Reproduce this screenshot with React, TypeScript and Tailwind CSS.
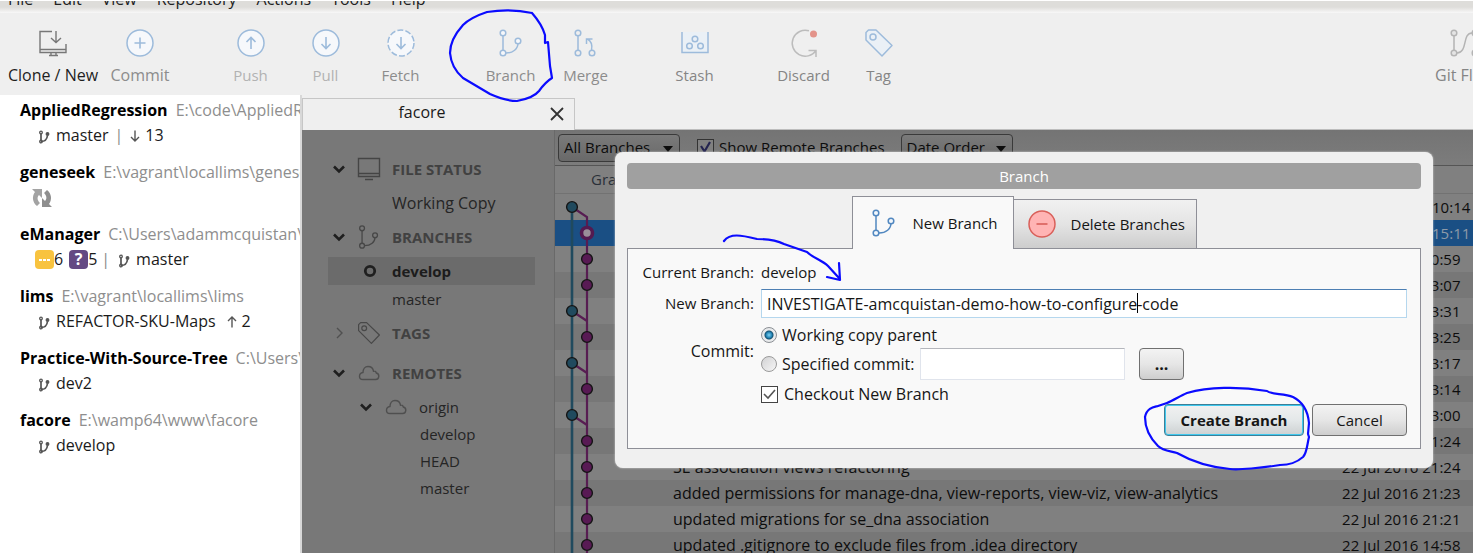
import type { ReactNode } from "react";

const blue = "#9dbbdb";

function Svg({ children, w = 30, h = 30, className = "" }: { children: ReactNode; w?: number; h?: number; className?: string }) {
  return (
    <svg width={w} height={h} viewBox={`0 0 ${w} ${h}`} fill="none" className={`shrink-0 ${className}`} aria-hidden="true">
      {children}
    </svg>
  );
}

function BranchGlyph({ color, fill = "none", size = 30 }: { color: string; fill?: string; size?: number }) {
  return (
    <svg width={size} height={size} viewBox="0 0 30 30" fill="none" className="shrink-0" aria-hidden="true">
      <g stroke={color} strokeWidth="1.5">
        <path d="M7 8v14M10 25c7 0 12-4 12-10" />
        <circle cx="7" cy="5" r="2.8" fill={fill} />
        <circle cx="7" cy="25" r="2.8" fill={fill} />
        <circle cx="22" cy="13" r="2.8" fill={fill} />
      </g>
    </svg>
  );
}

function SmallBranch() {
  return (
    <Svg w={12} h={14} className="mt-0.5">
      <g stroke="#555" strokeWidth="1.3">
        <path d="M3 3.500v8M3 11.500c4 0 6-2 6.500-6" strokeWidth="1.700" />
        <circle cx="3" cy="2.500" r="1.300" />
        <circle cx="3" cy="11.500" r="1.300" />
        <circle cx="9.500" cy="4" r="1.300" fill="#555" />
      </g>
    </Svg>
  );
}

function SmallArrow({ up = false }: { up?: boolean }) {
  return (
    <Svg w={12} h={14}>
      <path d={up ? "M6 12.500V2M2 6l4-4 4 4" : "M6 1.500V12M2 8l4 4 4-4"} stroke="#555" strokeWidth="1.400" />
    </Svg>
  );
}

function Chevron({ open = true }: { open?: boolean }) {
  return (
    <Svg w={14} h={14}>
      {open ? (
        <path d="M2 4.500l5 5 5-5" stroke="#1f1f1f" strokeWidth="2.600" />
      ) : (
        <path d="M5 2l5 5-5 5" stroke="#505050" strokeWidth="1.400" />
      )}
    </Svg>
  );
}

function Cloud() {
  return (
    <Svg w={22} h={16}>
      <path
        d="M5 14.500h12.500a3.300 3.300 0 0 0 .8-6.500C18 6.500 16.500 6 15.500 6.200 15 3 12.500 1.500 10 1.500 7 1.500 5 4 5 7.500 3 7.800 1.500 9.200 1.500 11.200c0 2 1.500 3.300 3.500 3.300z"
        stroke="#4f4f4f"
        strokeWidth="1.400"
      />
    </Svg>
  );
}

function TagGlyph({ color, fill = "none", size = 30 }: { color: string; fill?: string; size?: number }) {
  return (
    <svg width={size} height={size} viewBox="0 0 30 30" fill="none" aria-hidden="true" className="shrink-0">
      <path d="M2 4.500L4.500 2H12L28 17.500 18 28 2 12z" fill={fill} stroke={color} strokeWidth="1.500" strokeLinejoin="round" />
      <circle cx="9" cy="9" r="3" stroke={color} strokeWidth="1.500" />
    </svg>
  );
}

const icons: Record<string, ReactNode> = {
  clone: (
    <Svg>
      <path d="M14 3.500H2v21h26V16M2 21.500h26M11 27.500h9M13 25v2M18 25v2" stroke="#777" strokeWidth="1.400" />
      <path d="M18 3v11M13 10l5 4.500 5-4.500" stroke="#777" strokeWidth="1.400" />
    </Svg>
  ),
  commit: (
    <Svg>
      <circle cx="15" cy="15" r="13" fill="#f6f8fb" stroke={blue} strokeWidth="1.500" />
      <path d="M15 9.500v11M9.500 15h11" stroke={blue} strokeWidth="1.600" />
    </Svg>
  ),
  push: (
    <Svg>
      <circle cx="15" cy="15" r="13" fill="#f6f8fb" stroke={blue} strokeWidth="1.500" />
      <path d="M15 21V9.500M10.500 14L15 9.500l4.500 4.500" stroke={blue} strokeWidth="1.600" />
    </Svg>
  ),
  pull: (
    <Svg>
      <circle cx="15" cy="15" r="13" fill="#f6f8fb" stroke={blue} strokeWidth="1.500" />
      <path d="M15 9v11.500M10.500 16l4.500 4.500 4.500-4.500" stroke={blue} strokeWidth="1.600" />
    </Svg>
  ),
  fetch: (
    <Svg>
      <circle cx="15" cy="15" r="13" fill="#f6f8fb" stroke={blue} strokeWidth="1.500" strokeDasharray="6 2.170" />
      <path d="M15 9v11.500M10.500 16l4.500 4.500 4.500-4.500" stroke={blue} strokeWidth="1.600" />
    </Svg>
  ),
  branch: <BranchGlyph color={blue} fill="#f6f8fb" />,
  merge: (
    <Svg>
      <g stroke={blue} strokeWidth="1.500">
        <path d="M7 8v14M20.500 22c1-5-.5-9-4-11M15.500 16V11h6" />
        <circle cx="7" cy="5" r="2.800" />
        <circle cx="7" cy="25" r="2.800" />
        <circle cx="21" cy="25" r="2.800" />
      </g>
    </Svg>
  ),
  stash: (
    <Svg>
      <path d="M2 4v20.500h26V4" fill="#eaf0f6" stroke={blue} strokeWidth="1.500" />
      <g stroke={blue} strokeWidth="1.500">
        <circle cx="15" cy="11" r="2.800" />
        <circle cx="9.500" cy="18" r="2.800" />
        <circle cx="20.500" cy="18" r="2.800" />
      </g>
    </Svg>
  ),
  discard: (
    <Svg>
      <path d="M20 2.800A13 13 0 1 0 27 22.500M19.500 22.500h7.500v6.500" stroke="#bcbcbc" strokeWidth="1.500" />
      <circle cx="24.500" cy="6" r="3.500" fill="#e3938a" />
    </Svg>
  ),
  tag: <TagGlyph color={blue} fill="#eaf0f6" />,
  flow: (
    <Svg>
      <g stroke="#b4b4b4" strokeWidth="1.500" fill="#e4e4e4">
        <path d="M4 8v14M7 25C18 25 12 5 22 5M25 8v14" fill="none" />
        <circle cx="4" cy="5" r="2.800" />
        <circle cx="4" cy="25" r="2.800" />
        <circle cx="25" cy="5" r="2.800" />
        <circle cx="25" cy="25" r="2.800" />
      </g>
    </Svg>
  ),
};

const tools = [
  { id: "clone", label: "Clone / New", cls: "w-[106px] text-base text-[#1e1e1e]" },
  { id: "commit", label: "Commit", cls: "w-[68px] text-base text-[#8c8c8c]" },
  { id: "push", label: "Push", cls: "ml-[39px] w-[75px] text-[#b2b2b2]" },
  { id: "pull", label: "Pull", cls: "w-[75px] text-[#b2b2b2]" },
  { id: "fetch", label: "Fetch", cls: "w-[75px] text-[#8c8c8c]" },
  { id: "branch", label: "Branch", cls: "ml-[35px] w-[75px] text-[#8c8c8c]" },
  { id: "merge", label: "Merge", cls: "w-[75px] text-[#8c8c8c]" },
  { id: "stash", label: "Stash", cls: "ml-[34px] w-[75px] text-[#858585]" },
  { id: "discard", label: "Discard", cls: "ml-[34px] w-[75px] text-[#858585]" },
  { id: "tag", label: "Tag", cls: "w-[75px] text-[#858585]" },
  { id: "flow", label: "Git Flow", cls: "ml-auto -mr-[22px] w-[60px] text-base text-[#858585]" },
];

function Toolbar() {
  return (
    <div className="flex h-[82px] shrink-0 overflow-hidden bg-[#efefef]">
      {tools.map((t) => (
        <button key={t.id} type="button" className={`flex shrink-0 flex-col items-center pt-[15px] whitespace-nowrap ${t.cls}`}>
          {icons[t.id]}
          <span className="mt-[7px] leading-5">{t.label}</span>
        </button>
      ))}
    </div>
  );
}

const repos: { name: string; path: string; status: ReactNode }[] = [
  {
    name: "AppliedRegression",
    path: "E:\\code\\AppliedRegression",
    status: (
      <div className="flex items-center gap-1.5 pl-[18px]">
        <SmallBranch />
        <span>master</span>
        <span className="text-[#8a8a8a]">|</span>
        <SmallArrow />
        <span className="-ml-0.5">13</span>
      </div>
    ),
  },
  {
    name: "geneseek",
    path: "E:\\vagrant\\locallims\\geneseek",
    status: (
      <div className="pt-0.5 pl-[11px]">
        <Svg w={22} h={22}>
          <path d="M1 2h10v9L8 8c-2 2-2 5 1 8l-3 3C1 15 1 9 4 5z" fill="#a3a3a3" />
          <path d="M21 20H11v-9l3 3c2-2 2-5-1-8l3-3c5 4 5 10 2 14z" fill="#8f8f8f" />
        </Svg>
      </div>
    ),
  },
  {
    name: "eManager",
    path: "C:\\Users\\adammcquistan\\Documents",
    status: (
      <div className="flex items-center pl-[15px]">
        <span className="flex size-[19px] items-center justify-center rounded bg-[#f8c33f]">
          <Svg w={13} h={4}>
            <path d="M1 1h3v2H1zM5 1h3v2H5zM9 1h3v2H9z" fill="#fff" />
          </Svg>
        </span>
        <span>6</span>
        <span className="ml-1.5 flex size-[19px] items-center justify-center rounded bg-[#644983] font-bold text-white">?</span>
        <span>5</span>
        <span className="mx-1 text-[#8a8a8a]">|</span>
        <span className="ml-1 flex items-center gap-1.5">
          <SmallBranch />
          master
        </span>
      </div>
    ),
  },
  {
    name: "lims",
    path: "E:\\vagrant\\locallims\\lims",
    status: (
      <div className="flex items-center gap-1.5 pl-[18px]">
        <SmallBranch />
        <span className="mr-1">REFACTOR-SKU-Maps</span>
        <SmallArrow up />
        <span className="-ml-0.5">2</span>
      </div>
    ),
  },
  {
    name: "Practice-With-Source-Tree",
    path: "C:\\Users\\adammcquistan",
    status: (
      <div className="flex items-center gap-1.5 pl-[18px]">
        <SmallBranch />
        <span>dev2</span>
      </div>
    ),
  },
  {
    name: "facore",
    path: "E:\\wamp64\\www\\facore",
    status: (
      <div className="flex items-center gap-1.5 pl-[18px]">
        <SmallBranch />
        <span>develop</span>
      </div>
    ),
  },
];

function Repos() {
  return (
    <aside className="w-[300px] shrink-0 overflow-hidden bg-white pt-[3px] pl-5 text-base text-[#1a1a1a]">
      {repos.map((r) => (
        <div key={r.name} className="mb-3 leading-[25px] whitespace-nowrap">
          <div className="flex h-[25px] gap-2">
            <span className="font-bold text-black">{r.name}</span>
            <span className="text-[#8e8e8e]">{r.path}</span>
          </div>
          <div className="h-[25px]">{r.status}</div>
        </div>
      ))}
    </aside>
  );
}

function Section({ icon, open = true, children }: { icon: ReactNode; open?: boolean; children: ReactNode }) {
  return (
    <h2 className="flex h-10 items-center pl-[30px] font-bold text-[#414141]">
      <Chevron open={open} />
      <span className="ml-2 flex w-[30px] justify-center">{icon}</span>
      <span className="ml-2">{children}</span>
    </h2>
  );
}

function Sidebar() {
  return (
    <nav className="w-[253px] shrink-0 border-r border-[#696969] bg-[#787878] pt-[19px] leading-7 text-[#252525]">
      <Section
        icon={
          <Svg w={24} h={24}>
            <path d="M1.500 1.500h21v18h-21zM1.500 16.500h21M8 22.500h8" stroke="#454545" strokeWidth="1.400" />
          </Svg>
        }
      >
        FILE STATUS
      </Section>
      <div className="pl-[90px] text-base leading-7">Working Copy</div>
      <Section icon={<BranchGlyph color="#474747" size={26} />}>BRANCHES</Section>
      <div className="mr-[19px] ml-[26px] flex items-center bg-[#6b6b6b] pl-[35px] font-bold text-[#1c1c1c]">
        <Svg w={14} h={14}>
          <circle cx="7" cy="7" r="4.700" stroke="#1f1f1f" strokeWidth="2.800" />
        </Svg>
        <span className="ml-[15px]">develop</span>
      </div>
      <div className="pl-[90px]">master</div>
      <Section open={false} icon={<TagGlyph color="#484848" size={24} />}>
        TAGS
      </Section>
      <Section icon={<Cloud />}>REMOTES</Section>
      <div className="flex items-center pl-[57px]">
        <Chevron />
        <span className="mx-3">
          <Cloud />
        </span>
        origin
      </div>
      <div className="pl-[118px] leading-[27px]">develop</div>
      <div className="pl-[118px] leading-[27px]">HEAD</div>
      <div className="pl-[118px] leading-[27px]">master</div>
    </nav>
  );
}

const commits = [
  { lane: 0, text: "", date: "11 Aug 2016 10:14" },
  { lane: 1, text: "", date: "10 Aug 2016 15:11", selected: true },
  { lane: 1, text: "", date: "25 Jul 2016 10:59" },
  { lane: 1, text: "", date: "24 Jul 2016 13:07" },
  { lane: 0, text: "", date: "23 Jul 2016 23:31" },
  { lane: 1, text: "", date: "23 Jul 2016 23:25" },
  { lane: 0, text: "", date: "23 Jul 2016 23:17" },
  { lane: 1, text: "", date: "23 Jul 2016 23:14" },
  { lane: 0, text: "", date: "23 Jul 2016 23:00" },
  { lane: 1, text: "", date: "22 Jul 2016 21:24" },
  { lane: 1, text: "SE association views refactoring", date: "22 Jul 2016 21:24" },
  { lane: 1, text: "added permissions for manage-dna, view-reports, view-viz, view-analytics", date: "22 Jul 2016 21:23" },
  { lane: 1, text: "updated migrations for se_dna association", date: "22 Jul 2016 21:21" },
  { lane: 1, text: "updated .gitignore to exclude files from .idea directory", date: "22 Jul 2016 14:58" },
];

function Graph() {
  return (
    <svg width="60" height="364" viewBox="0 0 60 364" fill="none" className="absolute top-[27px] left-0" aria-hidden="true">
      <path d="M17 14V364" stroke="#204a5e" strokeWidth="2.600" />
      <path d="M17 14L32 24V364M17 118l15 10M17 170l15 10M17 222l15 10" stroke="#571d52" strokeWidth="2.200" />
      {commits.map((c, i) =>
        c.selected ? (
          <circle key={i} cx={32} cy={14 + i * 26} r="5.500" fill="#9a8f99" stroke="#541a50" strokeWidth="3.600" />
        ) : (
          <circle
            key={i}
            cx={c.lane ? 32 : 17}
            cy={14 + i * 26}
            r="5.400"
            fill={c.lane ? "#581a54" : "#204a5e"}
            stroke="#151515"
            strokeWidth="1.400"
          />
        ),
      )}
    </svg>
  );
}

function DarkSelect({ label, width }: { label: string; width: string }) {
  return (
    <div className={`relative h-7 ${width}`}>
      <select
        aria-label={label}
        className="h-full w-full appearance-none rounded border border-[#3a3a3a] bg-linear-to-b from-[#7a7a7a] to-[#696969] pl-[5px] text-[#0c0c0c]"
      >
        <option>{label}</option>
      </select>
      <svg width="10" height="6" viewBox="0 0 10 6" className="pointer-events-none absolute top-[12px] right-[7px]" aria-hidden="true">
        <path d="M0 0h10L5 6z" fill="#0c0c0c" />
      </svg>
    </div>
  );
}

function Log() {
  return (
    <section className="flex min-w-0 grow flex-col">
      <div className="flex h-[36px] shrink-0 items-center border-b border-[#555] bg-linear-to-b from-[#747474] to-[#7c7c7c] pl-[3px]">
        <DarkSelect label="All Branches" width="w-[122px]" />
        <label className="ml-[17px] flex items-center gap-[5px] text-[#0c0c0c]">
          <span className="grid">
            <input type="checkbox" defaultChecked className="col-start-1 row-start-1 size-[17px] appearance-none border border-[#333] bg-[#808080]" />
            <svg width="17" height="17" viewBox="0 0 17 17" fill="none" className="pointer-events-none col-start-1 row-start-1" aria-hidden="true">
              <path d="M4 7l3.500 5.500L13 3" stroke="#23234f" strokeWidth="2.200" />
            </svg>
          </span>
          Show Remote Branches
        </label>
        <div className="ml-4">
          <DarkSelect label="Date Order" width="w-[112px]" />
        </div>
      </div>
      <div className="relative">
        <table className="w-full table-fixed border-collapse leading-[26px] text-[#0d0d0d]">
          <colgroup>
            <col className="w-[118px]" />
            <col />
            <col className="w-[131px]" />
          </colgroup>
          <thead>
            <tr className="h-[27px] border-b border-[#727272] bg-[#808080] text-left text-[#2a3038]">
              <th className="pl-9 font-normal">Graph</th>
              <th className="font-normal" />
              <th className="font-normal" />
            </tr>
          </thead>
          <tbody>
            {commits.map((c, i) => (
              <tr key={i} className={`h-[26px] ${c.selected ? "bg-[#1a4f84] text-[#8d9aa8]" : i % 2 ? "bg-[#777777]" : "bg-[#808080]"}`}>
                <td />
                <td className="truncate text-base leading-[26px]">{c.text}</td>
                <td className="whitespace-nowrap">{c.date}</td>
              </tr>
            ))}
          </tbody>
        </table>
        <Graph />
      </div>
    </section>
  );
}

const button = "rounded-[4px] border border-[#707070] bg-linear-to-b from-[#f3f3f3] via-[#e6e6e6] to-[#cecece] h-8";

function BranchDialog() {
  return (
    <div role="dialog" aria-label="Branch" className="absolute top-[57px] right-[40px] left-[615px] rounded-lg bg-[#f0f0f0] px-3 pt-[11px] pb-[19px] text-[#161616] shadow-[0_0_2px_#ddd]">
      <div className="h-[26px] rounded bg-[#a0a0a0] text-center leading-[26px] text-white">Branch</div>
      <div role="tablist" className="mt-[7px] flex h-[52px] items-end justify-center">
        <button role="tab" aria-selected="true" type="button" className="z-10 -mb-px flex h-[53px] w-[162px] items-center border border-b-0 border-[#8e8f97] bg-[#f9f9f9] pl-[16px]">
          <BranchGlyph color="#5288c0" fill="#f2f7fc" />
          <span className="ml-3.5">New Branch</span>
        </button>
        <button role="tab" aria-selected="false" type="button" className="flex h-[49px] w-[183px] items-center border border-b-0 border-l-0 border-[#8e8f97] bg-linear-to-b from-[#f1f1f1] via-[#e4e4e4] to-[#cdcdcd] pl-[13px]">
          <Svg>
            <circle cx="15" cy="15" r="13" fill="#ffb4b4" stroke="#d9605a" strokeWidth="1.500" />
            <path d="M9.500 15h11" stroke="#d9605a" strokeWidth="1.600" />
          </Svg>
          <span className="ml-3.5">Delete Branches</span>
        </button>
      </div>
      <form className="border border-[#8e8f97] bg-[#f9f9f9] pt-[11px] pr-[13px] pb-3" onSubmit={(e) => e.preventDefault()}>
        <div className="grid grid-cols-[126px_1fr] items-center gap-x-[7px]">
          <span className="h-6 text-right leading-6 whitespace-nowrap">Current Branch:</span>
          <span className="h-6 leading-6">develop</span>
          <label htmlFor="new-branch" className="text-right">
            New Branch:
          </label>
          <div className="relative mt-[5px] mb-1 h-[29px] text-base">
            <input
              id="new-branch"
              defaultValue="INVESTIGATE-amcquistan-demo-how-to-configure-code"
              className="h-full w-full border border-[#b5d7ee] border-t-[#4d7fb3] bg-white pl-[5px] outline-none"
            />
            <span className="absolute top-1 left-[376px] h-5 w-px bg-black" />
          </div>
          <span className="text-right text-base">Commit:</span>
          <div className="text-base">
            <label className="flex h-[26px] items-center gap-[5px]">
              <input type="radio" name="commit" defaultChecked className="size-4 appearance-none rounded-full border border-[#8b8f94] bg-[radial-gradient(circle_at_center,#7fd4f5_0,#1f7fb0_3px,#15506f_4px,#e8eaec_5px)]" />
              Working copy parent
            </label>
            <div className="flex h-8 items-center">
              <input id="specified" type="radio" name="commit" className="size-4 appearance-none rounded-full border border-[#9a9a9a] bg-linear-to-br from-[#d2d2d4] to-[#f6f6f6]" />
              <label htmlFor="specified" className="ml-[5px] w-[138px] whitespace-nowrap">
                Specified commit:
              </label>
              <input aria-label="Commit hash" className="h-8 w-[205px] border border-[#e0e4ec] border-t-[#b4b6bc] bg-white px-1" />
              <button type="button" aria-label="Choose commit" className={`ml-3.5 w-[45px] font-bold ${button}`}>
                ...
              </button>
            </div>
          </div>
          <span />
          <label className="flex h-7 items-center gap-1.5 text-base">
            <span className="grid">
              <input type="checkbox" defaultChecked className="col-start-1 row-start-1 size-[17px] appearance-none border border-[#444] bg-white" />
              <svg width="17" height="17" viewBox="0 0 17 17" fill="none" className="pointer-events-none col-start-1 row-start-1" aria-hidden="true">
                <path d="M3 8l4 4 7-8" stroke="#555" strokeWidth="1.600" />
              </svg>
            </span>
            Checkout New Branch
          </label>
        </div>
        <div className="-mt-1 flex justify-end gap-2">
          <button type="submit" className="h-8 w-[140px] rounded-[4px] border border-[#3c7f97] bg-linear-to-b from-[#f1f1f1] via-[#e4e8e9] to-[#cdd1d2] font-bold whitespace-nowrap shadow-[inset_0_0_0_1px_#3fc8ee]">
            Create Branch
          </button>
          <button type="button" className={`w-[95px] ${button}`}>
            Cancel
          </button>
        </div>
      </form>
    </div>
  );
}

function InkMarks() {
  return (
    <svg width="1474" height="553" viewBox="0 0 1474 553" fill="none" className="pointer-events-none absolute top-0 left-0" aria-hidden="true">
      <g stroke="#0b0bff" strokeWidth="2.200" strokeLinecap="round" strokeLinejoin="round">
        <path d="M532 13C518 10 500 10 487 12C478 15 469 19 463 25C454 35 450 43 450 53C451 65 456 72 463 78L490 94C499 98 508 101 517 101C528 99 535 96 539 91C544 84 547 81 552 78L550 66L548 42L545 43L545 35C543 28 539 21 532 13" />
        <path d="M724 241C730 233 741 235 757 239C766 239 776 240 784 244L807 252C813 258 822 260 828 266L839 278M839 263L840 280L827 277" />
        <path d="M1167 403C1174 400 1180 396 1187 393C1208 387 1238 386 1267 391C1272 395 1284 393 1293 397C1303 402 1308 412 1309 423L1308 434L1309 437C1307 445 1307 453 1303 457C1296 463 1290 465 1280 465C1262 468 1238 470 1230 469C1208 467 1191 461 1177 453C1170 451 1163 451 1158 446C1151 439 1145 430 1145 417C1147 407 1155 407 1158 406L1167 403" />
      </g>
    </svg>
  );
}

export default function App() {
  return (
    <div className="relative flex h-screen flex-col overflow-hidden bg-white pt-px pr-px pb-[7px] font-['Open_Sans','Noto_Sans',sans-serif] text-[15px]">
      <header className="flex h-3 shrink-0 items-end gap-5 overflow-hidden bg-linear-to-b from-[#deddda] from-50% to-[#f8f8f8] pl-2 text-base leading-5 text-[#222]">
        {["File", "Edit", "View", "Repository", "Actions", "Tools", "Help"].map((m) => (
          <span key={m} className="mb-1">
            {m}
          </span>
        ))}
      </header>
      <Toolbar />
      <div className="relative flex min-h-0 grow bg-[#efefef]">
        <Repos />
        <main className="flex min-w-0 grow flex-col border-l-2 border-[#d8d8d8]">
          <div className="flex h-[35px] shrink-0 items-end border-b border-[#bdbdbd]">
            <div className="-mb-px flex h-8 w-[273px] items-start border border-b-0 border-[#c6c6c6] bg-[#efefef] text-[#1a1a1a]">
              <span className="grow pr-2 text-center text-base leading-[26px]">facore</span>
              <button type="button" aria-label="Close tab" className="mt-[7px] mr-[9px]">
                <Svg w={16} h={16}>
                  <path d="M2 2l12 12M14 2L2 14" stroke="#333" strokeWidth="1.800" />
                </Svg>
              </button>
            </div>
          </div>
          <div className="flex min-h-0 grow overflow-hidden">
            <Sidebar />
            <Log />
          </div>
        </main>
        <BranchDialog />
      </div>
      <InkMarks />
    </div>
  );
}
